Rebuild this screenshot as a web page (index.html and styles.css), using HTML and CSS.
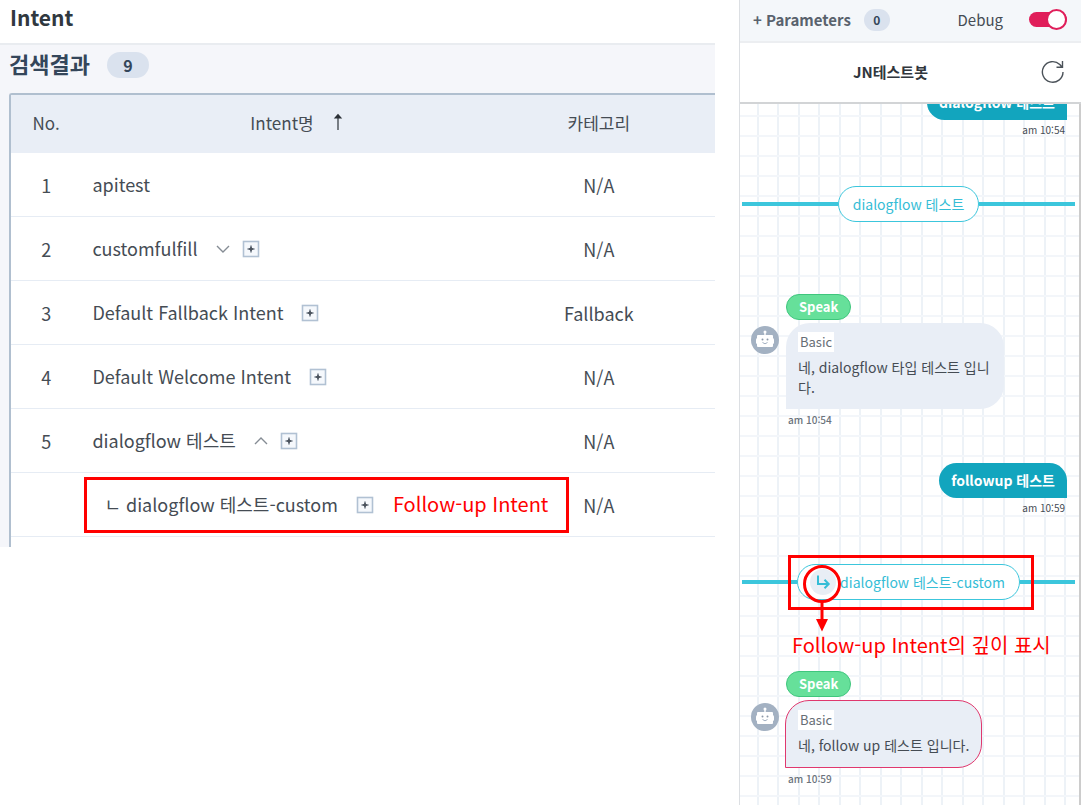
FILE: index.html
```html
<!DOCTYPE html>
<html lang="ko">
<head>
<meta charset="utf-8">
<title>Intent</title>
<link rel="stylesheet" href="styles.css">
</head>
<body>
<svg class="defs" aria-hidden="true">
  <symbol id="plus-box" viewBox="0 0 18 18">
    <rect x="1.5" y="1.5" width="15" height="15" fill="#f5f8fc" stroke="#b1c1d3" stroke-width="1.6"/>
    <path d="M9 5.5v7M5.5 9h7" stroke="#8b939d" stroke-width="2"/>
    <path d="M9 7.2v3.6M7.2 9h3.6" stroke="#4a525c" stroke-width="2"/>
  </symbol>
  <symbol id="robot" viewBox="0 0 28 28">
    <circle cx="14" cy="14" r="14" fill="#a3b1c2"/>
    <path d="M14 6v4" stroke="#fff" stroke-width="1.4"/>
    <circle cx="14" cy="6" r="1.5" fill="#fff"/>
    <rect x="5" y="12" width="18" height="6" rx="1.5" fill="#fff"/>
    <rect x="6" y="9" width="16" height="12" rx="1" fill="#fff"/>
    <circle cx="11.5" cy="13.5" r="1" fill="#8b98a8"/>
    <circle cx="16.5" cy="13.5" r="1" fill="#8b98a8"/>
    <path d="M11.5 16.5q2.5 2.6 5 0" fill="none" stroke="#a3b1c2"/>
  </symbol>
</svg>

<div class="workspace">
  <main class="intents">
    <h1 class="page-title">Intent</h1>
    <section class="results">
      <div class="results-bar">
        <h2 class="results-title">검색결과</h2>
        <span class="count">9</span>
      </div>
      <table class="intent-table">
        <colgroup><col class="col-no"><col class="col-name"><col class="col-cat"></colgroup>
        <thead>
          <tr>
            <th scope="col">No.</th>
            <th scope="col"><button class="sort" type="button">Intent명<svg class="sort-arrow" viewBox="0 0 10 18" aria-hidden="true"><path d="M5 17V4" stroke="#6b7178" stroke-width="1.8"/><path d="M.8 5.5 5 .8l4.200 4.700z" fill="#2b3036"/></svg></button></th>
            <th scope="col">카테고리</th>
          </tr>
        </thead>
        <tbody>
          <tr><td>1</td><td class="name"><div class="name-row">apitest</div></td><td>N/A</td></tr>
          <tr><td>2</td><td class="name"><div class="name-row">customfulfill
            <span class="tools"><button class="icon-btn" type="button" aria-label="펼치기"><svg class="chevron" viewBox="0 0 14 8"><path d="M1 1l6 6 6-6"/></svg></button><button class="icon-btn" type="button" aria-label="추가"><svg class="plus"><use href="#plus-box"/></svg></button></span></div></td><td>N/A</td></tr>
          <tr><td>3</td><td class="name"><div class="name-row">Default Fallback Intent
            <span class="tools"><button class="icon-btn" type="button" aria-label="추가"><svg class="plus"><use href="#plus-box"/></svg></button></span></div></td><td>Fallback</td></tr>
          <tr><td>4</td><td class="name"><div class="name-row">Default Welcome Intent
            <span class="tools"><button class="icon-btn" type="button" aria-label="추가"><svg class="plus"><use href="#plus-box"/></svg></button></span></div></td><td>N/A</td></tr>
          <tr><td>5</td><td class="name"><div class="name-row">dialogflow 테스트
            <span class="tools"><button class="icon-btn" type="button" aria-label="접기"><svg class="chevron" viewBox="0 0 14 8"><path d="M1 7l6-6 6 6"/></svg></button><button class="icon-btn" type="button" aria-label="추가"><svg class="plus"><use href="#plus-box"/></svg></button></span></div></td><td>N/A</td></tr>
          <tr class="child"><td></td><td class="name"><div class="name-row">ㄴ dialogflow 테스트-custom
            <span class="tools"><button class="icon-btn" type="button" aria-label="추가"><svg class="plus"><use href="#plus-box"/></svg></button></span><span class="note">Follow-up Intent</span></div><span class="row-mark"></span></td><td>N/A</td></tr>
          <tr class="tail"><td></td><td></td><td></td></tr>
        </tbody>
      </table>
    </section>
  </main>

  <aside class="tester">
    <header class="params">
      <button class="params-btn" type="button">+ Parameters</button>
      <span class="count count-small">0</span>
      <label class="debug">Debug<input class="switch" type="checkbox" role="switch" checked></label>
    </header>
    <div class="bot-bar">
      <h2 class="bot-name">JN테스트봇</h2>
      <button class="icon-btn refresh" type="button" aria-label="새로고침"><svg viewBox="0 0 24 24"><path d="M22 12a10.300 10.300 0 1 1-3.200-7.500L21 7M21.500 1v6.300h-6" /></svg></button>
    </div>
    <div class="chat">
      <div class="sent sent-first"><p class="bubble-out">dialogflow 테스트</p><time class="time-out">am 10:54</time></div>
      <div class="divider"><span class="pill">dialogflow 테스트</span></div>
      <article class="reply">
        <span class="speak">Speak</span>
        <svg class="avatar" aria-hidden="true"><use href="#robot"/></svg>
        <div class="bubble-in"><span class="type">Basic</span><p class="msg">네, dialogflow 타입 테스트 입니다.</p></div>
        <time class="time-in">am 10:54</time>
      </article>
      <div class="sent"><p class="bubble-out">followup 테스트</p><time class="time-out">am 10:59</time></div>
      <div class="divider divider-follow"><span class="pill pill-follow"><svg class="depth" viewBox="0 0 26 26" aria-hidden="true"><circle cx="13" cy="13" r="13" fill="#e8eef5"/><path d="M8 6.500V15h10.500M14.500 10.800 18.700 15l-4.200 4.200" fill="none" stroke="#35bdd6" stroke-width="2"/></svg>dialogflow 테스트-custom
        <span class="pill-mark"></span>
        <svg class="depth-mark" viewBox="0 0 38 67" aria-hidden="true"><circle cx="19" cy="19" r="17.500" fill="none" stroke="red" stroke-width="3"/><path d="M19 37v20" stroke="red" stroke-width="3"/><path d="M13 54h12l-6 12.500z" fill="red"/></svg>
      </span></div>
      <p class="note chat-note">Follow-up Intent의 깊이 표시</p>
      <article class="reply">
        <span class="speak">Speak</span>
        <svg class="avatar" aria-hidden="true"><use href="#robot"/></svg>
        <div class="bubble-in selected"><span class="type">Basic</span><p class="msg">네, follow up 테스트 입니다.</p></div>
        <time class="time-in">am 10:59</time>
      </article>
    </div>
  </aside>
</div>
</body>
</html>
```

FILE: styles.css
```css
* { box-sizing: border-box; }
body {
  margin: 0;
  background: #fff;
  color: #454c54;
  font-family: "Noto Sans CJK KR", "Noto Sans", sans-serif;
  font-size: 18px;
}
h1, h2, p { margin: 0; }
button { border: 0; padding: 0; background: none; color: inherit; font: inherit; cursor: pointer; }
svg { display: block; }
.defs { position: absolute; width: 0; height: 0; }

.workspace {
  display: grid;
  grid-template-columns: 715fr 342fr;
  gap: 24px;
  min-height: 100vh;
  padding-right: 9px;
}

/* Intent list */
.page-title {
  height: 45px;
  padding-left: 10px;
  border-bottom: 2px solid #e9ecf0;
  color: #30383f;
  font-size: 21px;
  font-weight: 700;
  line-height: 34px;
}
.results { padding-left: 9px; background: #f5f6fa; }
.results-bar { display: flex; align-items: center; gap: 17px; height: 48px; padding-bottom: 8px; }
.results-title { padding-bottom: 4px; color: #34465a; font-size: 22px; font-weight: 700; line-height: 32px; }
.count {
  min-width: 42px;
  border-radius: 13px;
  background: #dae2ee;
  color: #34465a;
  font-size: 16px;
  font-weight: 700;
  line-height: 26px;
  text-align: center;
}
.intent-table {
  width: 100%;
  table-layout: fixed;
  border-collapse: separate;
  border-spacing: 0;
  border: solid #b0bfcf;
  border-width: 2px 0 0 2px;
  border-top-left-radius: 3px;
  background: #fff;
}
.col-no { width: 10%; }
.col-name { width: 57%; }
.intent-table th {
  height: 58px;
  padding: 0 0 4px;
  background: #e9eef6;
  font-size: 17px;
  font-weight: 400;
  text-align: center;
}
.intent-table td { height: 64px; padding: 0; border-bottom: 1px solid #e6ecf4; text-align: center; }
.intent-table .name { position: relative; padding: 0 0 2px 11px; text-align: left; }
.intent-table .tail td { height: 10px; border: 0; }
.sort { position: relative; }
.sort-arrow { position: absolute; left: 100%; top: 3px; width: 10px; height: 18px; margin-left: 19px; }
.name-row { display: flex; align-items: center; white-space: nowrap; }
.tools { display: flex; align-items: center; gap: 12px; margin: 2px 0 0 18px; }
.icon-btn { display: block; }
.chevron { width: 14px; height: 8px; fill: none; stroke: #858c94; stroke-width: 1.4; }
.plus { width: 18px; height: 18px; }
.child .name-row { padding-left: 12px; }
.row-mark { position: absolute; left: 3px; top: 4px; width: 485px; height: 56px; border: 3px solid red; }
.note { color: red; font-size: 20px; font-weight: 400; line-height: 30px; }
.name-row .note { margin-left: 19px; }

/* Bot tester */
.tester { display: flex; flex-direction: column; border-left: 1px solid #dcdfe3; }
.params {
  display: flex;
  align-items: center;
  height: 43px;
  padding: 0 14px 2px 13px;
  border-bottom: 2px solid #eceef1;
  background: #f4f7fa;
  font-size: 15px;
}
.params-btn { color: #59626d; font-weight: 700; }
.count-small { min-width: 26px; margin-left: 13px; font-size: 12px; line-height: 22px; }
.debug { display: flex; align-items: center; gap: 26px; margin-left: auto; }
.switch {
  position: relative;
  appearance: none;
  width: 38px;
  height: 15px;
  margin: 0;
  border-radius: 8px;
  background: #e01e5a;
}
.switch::after {
  content: "";
  position: absolute;
  right: 0;
  top: -3px;
  width: 21px;
  height: 21px;
  border: 2px solid #e01e5a;
  border-radius: 50%;
  background: #fff;
  box-sizing: border-box;
}
.bot-bar {
  display: flex;
  align-items: center;
  gap: 16px;
  height: 61px;
  padding: 0 16px 2px;
  border-bottom: 2px solid #d2d4d6;
}
.bot-name { flex: 1; color: #30363c; font-size: 15px; font-weight: 700; text-align: center; }
.refresh svg { width: 24px; height: 24px; fill: none; stroke: #4b5259; stroke-width: 1.4; }

.chat {
  flex: 1;
  overflow: hidden;
  border-right: 2px solid #ccc;
  background-color: #fff;
  background-image:
    linear-gradient(#f3f6fa 2px, transparent 2px),
    linear-gradient(90deg, #edf2f7 2px, transparent 2px, transparent 20px, #edf2f7 20px, #edf2f7 22px, transparent 22px);
  background-size: 20px 20px, 41px 20px;
  background-position: 0 11px, 17px 0;
  font-size: 14px;
}
.sent { display: flex; flex-direction: column; align-items: flex-end; padding: 0 12px; }
.sent-first { margin-top: -19px; }
.bubble-out {
  padding: 0 12px;
  border-radius: 18px 18px 0 18px;
  background: #12a5be;
  color: #fff;
  font-weight: 700;
  line-height: 35px;
}
.time-out { margin: 2px 2px 0 0; font-size: 10px; line-height: 16px; }
.divider {
  display: flex;
  align-items: center;
  margin: 48px 4px 0 2px;
}
.divider::before, .divider::after { content: ""; flex: 1; height: 4px; background: #3cc6dc; }
.pill {
  position: relative;
  display: flex;
  align-items: center;
  padding: 0 14px;
  border: 1px solid #3cc6dc;
  border-radius: 18px;
  background: #fff;
  color: #35bdd6;
  line-height: 34px;
}
.pill-follow { padding-left: 12px; }
.depth { width: 26px; height: 26px; margin-right: 4px; }
.pill-mark { position: absolute; inset: -10px -15px -11px -10px; border: 3px solid red; }
.depth-mark { position: absolute; left: 5px; top: 0; width: 38px; height: 67px; }
.chat-note { padding-left: 52px; margin-top: 30px; white-space: nowrap; }
.reply {
  display: grid;
  grid-template-columns: 28px minmax(0, 218px);
  column-gap: 7px;
  margin: 72px 0 35px 11px;
}
.chat-note + .reply { margin-top: 11px; }
.speak {
  grid-column: 2;
  justify-self: start;
  padding: 0 12px;
  border: 1px solid #3fc67d;
  border-radius: 13px;
  background: #66e09a;
  color: #fff;
  font-size: 13px;
  font-weight: 700;
  line-height: 24px;
}
.avatar { grid-column: 1; width: 28px; height: 28px; margin-top: 6px; }
.bubble-in {
  justify-self: start;
  margin-top: 3px;
  padding: 9px 12px 12px;
  border-radius: 24px 24px 24px 0;
  background: #e9eef6;
}
.selected { margin-left: -1px; border: 1px solid #e0386e; }
.type { display: block; width: fit-content; padding: 0 2px; background: #fff; color: #666d75; font-size: 13px; line-height: 20px; }
.msg { margin-top: 5px; line-height: 20px; word-break: break-all; }
.time-in { grid-column: 2; margin: 3px 0 0 2px; color: #6b737c; font-size: 10px; font-weight: 500; line-height: 16px; }
```
